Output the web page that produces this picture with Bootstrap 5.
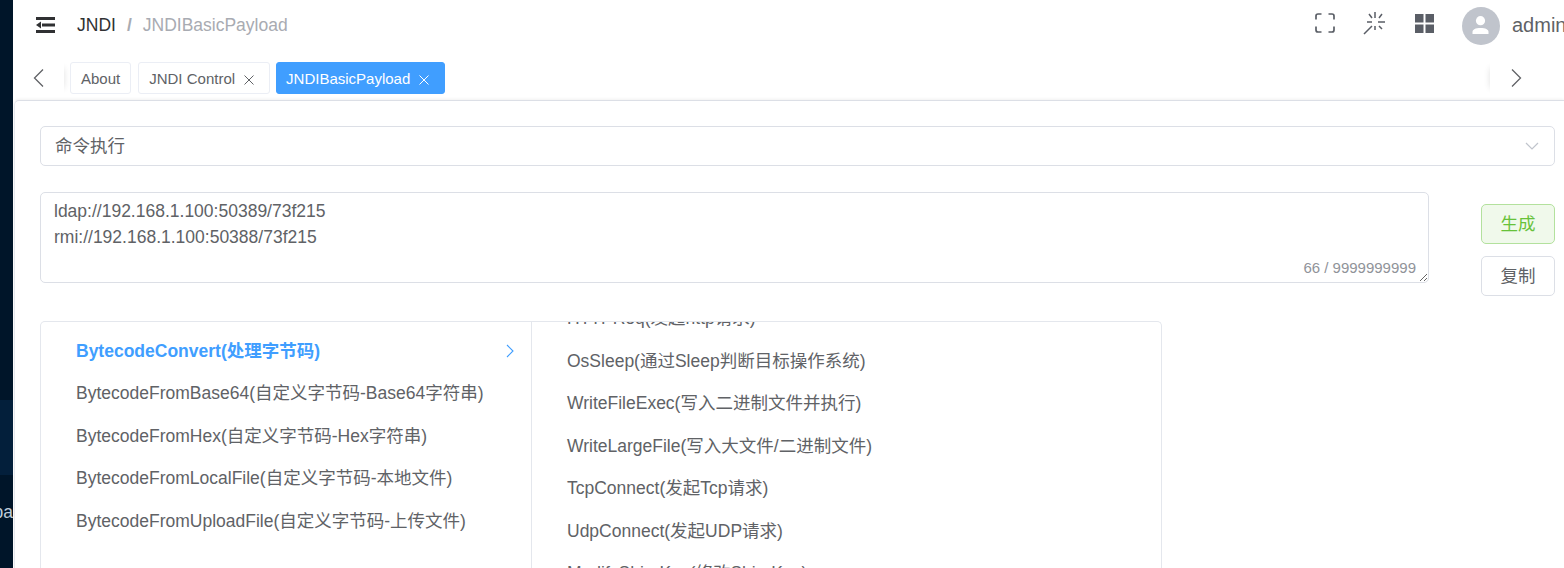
<!DOCTYPE html>
<html lang="zh-CN">
<head>
<meta charset="utf-8">
<title>JNDIBasicPayload</title>
<link href="https://cdn.jsdelivr.net/npm/bootstrap@5.3.0/dist/css/bootstrap.min.css" rel="stylesheet">
<style>
html,body{height:568px;overflow:hidden;background:#fff}
body{font-family:"Liberation Sans","Noto Sans CJK SC",sans-serif;font-size:17.5px;color:#606266}
.shell{height:568px;width:1564px}
.side{width:13px;flex:none;background:#001529;overflow:hidden;color:#bfcbd9}
.side-lit{height:75px;margin-top:400px;background:#031f3b}
.side-txt{height:40px;margin-top:17px;line-height:40px;font-size:17.5px;white-space:nowrap;justify-content:flex-end}
.content{width:1551px;flex:none;overflow:hidden}
.topbar{height:50px;padding-left:23px;padding-right:0}
.fold{width:19px;height:16px;margin-right:22px;margin-bottom:0;flex:none}
.crumb-a{color:#303133}
.crumb-s{color:#a8abb2;font-weight:700;margin:0 11px}
.crumb-b{color:#a8abb2}
.tool{width:24px;height:24px;flex:none;margin-right:26px;margin-bottom:4px}
.ava{width:38px;height:38px;flex:none;border-radius:50%;background:#c0c4cc;margin-left:-1px;margin-right:12px;margin-top:1px}
.uname{white-space:nowrap;width:52px;font-size:20px}
.tabrow{height:50px;padding-top:12px;background:#fff}
.tab-nav{width:51px;height:32px;flex:none}
.tab-l{box-shadow:6px 0 6px -6px rgba(0,0,0,.12);margin-right:6px}
.tab-r{box-shadow:-6px 0 6px -6px rgba(0,0,0,.12);width:74px;margin-left:auto}
.tabs{gap:7px}
.chip{height:32px;padding:0 10px;border:1px solid #ebeef5;border-radius:3px;font-size:15px;line-height:31px;color:#606266;background:#fff;white-space:nowrap}
.chip-x{padding-right:14px}
.chip svg{margin-left:8px}
.chip-on{background:#409eff;border-color:#409eff;color:#fff;margin-left:-1px;padding-left:9px}
.mainbox{height:468px;padding:25px 9px 0 25px;border-top:1px solid #dcdfe6;border-left:1px solid #e6e8ee;border-top-left-radius:5px;box-shadow:0 -1px 3px rgba(0,0,0,.06);margin-left:1px}
.pick{height:40px;border:1px solid #dcdfe6;border-radius:5px;padding:0 14px;color:#606266;width:1515px}
.area-row{margin-top:26px}
.area-wrap{width:1389px;height:91px}
.area{display:block;width:100%;height:91px;border:1px solid #dcdfe6;border-radius:5px;padding:5px 13px;font:inherit;font-size:17.5px;line-height:26px;color:#606266;outline:0;box-shadow:none}
.count{position:absolute;right:13px;bottom:5px;font-size:15px;line-height:20px;color:#909399}
.btns{width:74px;margin-left:52px;margin-top:12px;gap:12px}
.act{width:74px;height:40px;border-radius:5px;font-size:17.5px;padding:0;border:1px solid #dcdfe6;background:#fff;color:#606266}
.act-go{background:#f0f9eb;border-color:#b3e19d;color:#67c23a}
.casc{width:1122px;height:260px;margin-top:25px;border:1px solid #e4e7ed;border-bottom:0;border-radius:5px 5px 0 0;overflow:hidden}
.cpanel-a{width:491px;flex:none;border-right:1px solid #e4e7ed;padding-top:7.5px}
.cpanel-b{flex:1;overflow:hidden}
.cpanel-b .clist{margin-top:-25px}
.citem{height:42.5px;line-height:42.5px;padding-left:35px;white-space:nowrap;color:#606266}
.citem-on{color:#409eff;font-weight:700}
.citem-on svg{margin-right:16px}
</style>
</head>
<body>
<div class="shell d-flex">
  <aside class="side d-flex flex-column">
    <div class="side-lit"></div>
    <div class="side-txt d-flex">pa</div>
  </aside>
  <div class="content d-flex flex-column">
    <header class="topbar d-flex align-items-center">
      <svg class="fold" viewBox="0 0 19 16" fill="#303133"><rect x="0" y="0" width="19" height="3"/><rect x="6" y="6.500" width="13" height="3"/><path d="M0 8 5 4.500v7z"/><rect x="0" y="13" width="19" height="3"/></svg>
      <span class="crumb-a">JNDI</span><span class="crumb-s">/</span><span class="crumb-b">JNDIBasicPayload</span>
      <div class="ms-auto d-flex align-items-center">
        <svg class="tool" viewBox="0 0 24 24" fill="none" stroke="#5a5e66" stroke-width="1.700"><path d="M3 8.500V5a2 2 0 0 1 2-2h3.500M15.500 3H19a2 2 0 0 1 2 2v3.500M21 15.500V19a2 2 0 0 1-2 2h-3.500M8.500 21H5a2 2 0 0 1-2-2v-3.500"/></svg>
        <svg class="tool" viewBox="0 0 24 24" fill="none" stroke="#5a5e66" stroke-width="1.500"><path d="M12 1v6M4 11h5M15 11h7M6 3l3 4M19 3l-3 4M1 23l8-8M12 15v4M16 15l3 3"/></svg>
        <svg class="tool" viewBox="0 0 24 24" fill="#5a5e66"><rect x="2" y="3" width="8.500" height="8.500"/><rect x="12.500" y="3" width="8.500" height="8.500"/><rect x="2" y="13.500" width="8.500" height="8.500"/><rect x="12.500" y="13.500" width="8.500" height="8.500"/></svg>
        <svg class="ava" viewBox="0 0 38 38"><circle cx="18.500" cy="13.700" r="4.600" fill="#fff"/><path d="M10.500 27v-2c0-2.500 3-4 8-4s8 1.500 8 4v2z" fill="#fff"/></svg>
        <span class="uname">admin</span>
      </div>
    </header>
    <nav class="tabrow d-flex">
      <div class="tab-nav tab-l d-flex align-items-center ps-3">
        <svg width="20" height="20" viewBox="0 0 20 20" fill="none" stroke="#606266" stroke-width="1.300"><path d="M14 1.500 5.500 10 14 18.500"/></svg>
      </div>
      <div class="tabs d-flex">
        <span class="chip">About</span>
        <span class="chip chip-x">JNDI Control<svg width="12" height="12" viewBox="0 0 12 12" stroke="#606266" fill="none"><path d="M1.500 1.500l9 9M10.500 1.500l-9 9"/></svg></span>
        <span class="chip chip-x chip-on">JNDIBasicPayload<svg width="12" height="12" viewBox="0 0 12 12" stroke="#fff" fill="none"><path d="M1.500 1.500l9 9M10.500 1.500l-9 9"/></svg></span>
      </div>
      <div class="tab-nav tab-r d-flex align-items-center ps-3">
        <svg width="20" height="20" viewBox="0 0 20 20" fill="none" stroke="#606266" stroke-width="1.300"><path d="M6 1.500 14.500 10 6 18.500"/></svg>
      </div>
    </nav>
    <main class="mainbox">
      <div class="pick d-flex align-items-center justify-content-between">
        <span>命令执行</span>
        <svg width="16" height="16" viewBox="0 0 16 16" fill="none" stroke="#c0c4cc" stroke-width="1.200"><path d="M2 5l6 6 6-6"/></svg>
      </div>
      <div class="area-row d-flex">
        <div class="area-wrap position-relative">
          <textarea class="area">ldap://192.168.1.100:50389/73f215
rmi://192.168.1.100:50388/73f215</textarea>
          <span class="count">66 / 9999999999</span>
        </div>
        <div class="btns d-flex flex-column">
          <button type="button" class="btn act act-go">生成</button>
          <button type="button" class="btn act">复制</button>
        </div>
      </div>
      <div class="casc d-flex">
        <div class="cpanel-a">
          <div class="citem citem-on d-flex justify-content-between align-items-center"><span>BytecodeConvert(处理字节码)</span><svg width="10" height="16" viewBox="0 0 10 16" fill="none" stroke="#409eff" stroke-width="1.100"><path d="M2 2l6 6-6 6"/></svg></div>
          <div class="citem">BytecodeFromBase64(自定义字节码-Base64字符串)</div>
          <div class="citem">BytecodeFromHex(自定义字节码-Hex字符串)</div>
          <div class="citem">BytecodeFromLocalFile(自定义字节码-本地文件)</div>
          <div class="citem">BytecodeFromUploadFile(自定义字节码-上传文件)</div>
        </div>
        <div class="cpanel-b">
          <div class="clist">
            <div class="citem">HTTPReq(发起http请求)</div>
            <div class="citem">OsSleep(通过Sleep判断目标操作系统)</div>
            <div class="citem">WriteFileExec(写入二进制文件并执行)</div>
            <div class="citem">WriteLargeFile(写入大文件/二进制文件)</div>
            <div class="citem">TcpConnect(发起Tcp请求)</div>
            <div class="citem">UdpConnect(发起UDP请求)</div>
            <div class="citem">ModifyShiroKey(修改ShiroKey)</div>
          </div>
        </div>
      </div>
    </main>
  </div>
</div>
<script src="https://cdn.jsdelivr.net/npm/bootstrap@5.3.0/dist/js/bootstrap.bundle.min.js"></script>
</body>
</html>
